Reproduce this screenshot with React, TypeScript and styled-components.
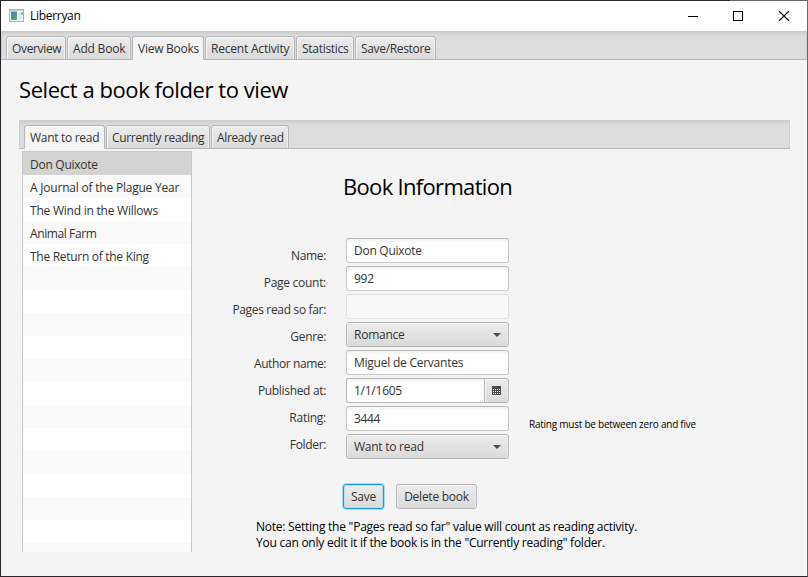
import React from "react";
import styled, { createGlobalStyle, css } from "styled-components";

const GlobalStyle = createGlobalStyle`
  *, *::before, *::after { box-sizing: border-box; }
  body { margin: 0; overflow: hidden; background: #f4f4f4; }
  button, input { font: inherit; letter-spacing: inherit; color: inherit; }
`;

const Window = styled.div`
  width: 808px;
  height: 577px;
  display: flex;
  flex-direction: column;
  background: #f4f4f4;
  border: 1px solid #28252c;
  border-right-color: #696969;
  font: 12px/16px "Open Sans", "Noto Sans", sans-serif;
  letter-spacing: -0.25px;
  color: #333;
  position: relative;

  &::before {
    content: "";
    position: absolute;
    top: -1px;
    right: -1px;
    width: 78px;
    height: 1px;
    background: #696969;
  }
`;

const TitleBar = styled.header`
  flex: none;
  height: 30px;
  display: flex;
  align-items: center;
  padding: 0 17px 0 8px;
  background: #fff;
  color: #000;
`;

const Title = styled.span`
  flex: 1;
  padding: 0 0 0 5px;
  letter-spacing: -0.3px;
`;

const WindowControls = styled.div`
  display: flex;
  gap: 35px;

  svg { display: block; }
`;

const TabHeader = styled.nav<{ $inner?: boolean }>`
  flex: none;
  height: 29px;
  display: flex;
  align-items: flex-end;
  gap: 1px;
  padding-left: 5px;
  background: linear-gradient(#cbcbcb, #d6d6d6 3px, #ddd 6px);
  box-shadow: inset 0 -1px #b5b5b5, inset 1px 0 #cecece, inset -1px 0 #cecece;
  ${(p) => p.$inner && css`margin: 0 17px 0 18px;`}
`;

const Tab = styled.button<{
  $width: number;
  $spacing: number;
  $selected?: boolean;
  $inner?: boolean;
}>`
  flex: none;
  width: ${(p) => p.$width}px;
  height: 24px;
  padding: ${(p) => (p.$inner ? 2 : 1)}px 0 0 5px;
  text-align: left;
  white-space: nowrap;
  line-height: ${(p) => (p.$inner ? 20 : 21)}px;
  letter-spacing: ${(p) => p.$spacing}px;
  border: 1px solid #b5b5b5;
  border-radius: 3px 3px 0 0;
  background: linear-gradient(#ececec, #dadada);
  box-shadow: inset 1px 1px #f8f8f8, inset -1px 0 #eee;
  ${(p) => p.$selected && css`
    background: #f4f4f4;
    border-bottom-color: #f4f4f4;
    box-shadow: inset 0 1px #fff;
  `}
`;

const Heading = styled.h1`
  margin: 14px 0 15px 18px;
  font-size: 22px;
  line-height: 31px;
  font-weight: 400;
  letter-spacing: -0.43px;
  color: #000;
`;

const Content = styled.main`
  display: flex;
  padding: 2px 0 0 21px;
`;

const BookList = styled.ul`
  flex: none;
  width: 170px;
  height: 401px;
  margin: 0;
  padding: 0;
  overflow: hidden;
  list-style: none;
  background: #fff;
  border: solid #c8c8c8;
  border-width: 1px 1px 0;
`;

const BookItem = styled.li<{ $spacing?: number; $selected?: boolean }>`
  height: 23px;
  padding-left: 7px;
  line-height: 25px;
  white-space: nowrap;
  letter-spacing: ${(p) => p.$spacing ?? -0.25}px;

  &:nth-child(even) { background: #f9f9f9; }
  ${(p) => p.$selected && css`background: #d3d3d3;`}
`;

const Details = styled.section`
  flex: 1;
  display: flex;
  flex-direction: column;
  align-items: flex-start;
`;

const Subheading = styled.h2`
  margin: 20px 0 0 151px;
  font-size: 22px;
  line-height: 31px;
  font-weight: 400;
  letter-spacing: -0.68px;
  color: #000;
`;

const Form = styled.form`
  display: flex;
  margin: 36px 0 0 34px;
`;

const Labels = styled.div`
  width: 100px;
  display: flex;
  flex-direction: column;
  align-items: flex-end;
  padding-top: 4px;
`;

const Label = styled.label<{ $spacing?: number }>`
  height: 27px;
  line-height: 27px;
  white-space: nowrap;
  letter-spacing: ${(p) => p.$spacing ?? -0.33}px;
`;

const Fields = styled.div`
  width: 163px;
  margin-left: 20px;
  display: flex;
  flex-direction: column;
  gap: 3px;
`;

const fieldBox = css`
  width: 100%;
  height: 25px;
  padding: 0 7px;
  border: 1px solid #bfbfbf;
  border-radius: 3px;
`;

const TextInput = styled.input<{ $spacing?: number }>`
  ${fieldBox}
  outline: none;
  border-color: #b9b9b9 #c4c4c4 #cbcbcb;
  background: linear-gradient(#f2f2f2, #fff 4px);
  letter-spacing: ${(p) => p.$spacing ?? -0.25}px;

  &:disabled {
    border-color: #dadada #dfdfdf #e2e2e2;
    background: #f8f8f8;
  }
`;

const Combo = styled.button`
  ${fieldBox}
  display: flex;
  align-items: center;
  justify-content: space-between;
  border-color: #b5b5b5;
  background: linear-gradient(#ececec, #dadada);
  box-shadow: inset 0 1px #f8f8f8, inset 1px 0 #eee, inset -1px 0 #eee;
`;

const DatePicker = styled.div`
  display: flex;
  height: 25px;
`;

const DateInput = styled(TextInput)`
  flex: 1;
  min-width: 0;
  border-color: #b5b5b5;
  border-right: 0;
  border-radius: 3px 0 0 3px;
`;

const DateButton = styled.button`
  width: 25px;
  padding: 0;
  display: grid;
  place-items: center;
  border: 1px solid #b5b5b5;
  border-radius: 0 3px 3px 0;
  background: linear-gradient(#ececec, #dadada);
  box-shadow: inset 1px 1px #f8f8f8, inset -1px 0 #eee;
`;

const Hint = styled.p`
  align-self: flex-start;
  margin: 178px 0 0 20px;
  font-size: 10px;
  line-height: 16px;
  letter-spacing: -0.24px;
  color: #000;
`;

const Actions = styled.div`
  display: flex;
  gap: 12px;
  margin: 25px 0 0 151px;
`;

const ActionButton = styled.button<{ $width: number; $focused?: boolean }>`
  width: ${(p) => p.$width}px;
  height: 25px;
  padding: 0;
  border: 1px solid #b5b5b5;
  border-radius: 3px;
  background: linear-gradient(#ececec, #dadada);
  box-shadow: inset 0 1px #f8f8f8, inset 1px 0 #eee, inset -1px 0 #eee;
  ${(p) => p.$focused && css`
    border-color: #0f9cd4;
    box-shadow: 0 0 0 1px #a9dcf0, inset 0 0 0 1px #b9e0ee;
  `}
`;

const Note = styled.p`
  margin: 10px 0 0 64px;
  line-height: 16px;
  white-space: nowrap;
  color: #000;
  letter-spacing: -0.24px;
`;

const AppIcon = () => (
  <svg width="16" height="14" viewBox="0 0 16 14">
    <defs>
      <linearGradient id="pane" x1="0" y1="0" x2="0.6" y2="1">
        <stop offset="0" stopColor="#4f7fae" />
        <stop offset="1" stopColor="#4fa77c" />
      </linearGradient>
    </defs>
    <rect x="0.5" y="0.5" width="14" height="12" fill="#f4f6f7" stroke="#a8adb0" />
    <path d="M1 1.5h13" stroke="#ccd1d3" />
    <path d="M2 2.5h6v8.5H2z" fill="url(#pane)" />
    <path d="M9 3h3v8H9z" fill="#e3e6e8" />
    <path d="M12 3h2v3h-2z" fill="#8fc5a8" />
    <path d="M12 6h2v5h-2z" fill="#eceff0" />
  </svg>
);

const Arrow = () => (
  <svg width="8" height="4" viewBox="0 0 8 4">
    <path d="M0 0h8L4 4z" fill="#4e4e4e" />
  </svg>
);

const Calendar = () => (
  <svg width="9" height="10" viewBox="0 0 9 10" shapeRendering="crispEdges">
    <path d="M0 0h9v9H0z" fill="#4e4e4e" />
    <path d="M0 9h9v1H0z" fill="#f4f4f4" />
    <path d="M1 3.5h7M1 5.5h7M1 7.5h7" stroke="#ededed" strokeDasharray="1 1" />
  </svg>
);

const mainTabs = [
  { label: "Overview", width: 60, spacing: -0.35 },
  { label: "Add Book", width: 64, spacing: -0.2 },
  { label: "View Books", width: 72, spacing: -0.25, selected: true },
  { label: "Recent Activity", width: 90, spacing: -0.2 },
  { label: "Statistics", width: 58, spacing: -0.28 },
  { label: "Save/Restore", width: 81, spacing: -0.33 },
];

const folderTabs = [
  { label: "Want to read", width: 81, spacing: -0.3, selected: true },
  { label: "Currently reading", width: 104, spacing: -0.33 },
  { label: "Already read", width: 78, spacing: -0.37 },
];

const books = [
  { title: "Don Quixote", spacing: -0.27, selected: true },
  { title: "A Journal of the Plague Year", spacing: -0.21 },
  { title: "The Wind in the Willows", spacing: -0.23 },
  { title: "Animal Farm", spacing: -0.4 },
  { title: "The Return of the King", spacing: -0.29 },
];

const emptyRows = Array.from({ length: 13 }, (_, i) => i);

type TabInfo = { label: string; width: number; spacing: number; selected?: boolean };

const Tabs = ({ items, inner }: { items: TabInfo[]; inner?: boolean }) => (
  <TabHeader $inner={inner}>
    {items.map((t) => (
      <Tab
        key={t.label}
        $width={t.width}
        $spacing={t.spacing}
        $selected={t.selected}
        $inner={inner}
      >
        {t.label}
      </Tab>
    ))}
  </TabHeader>
);

export default function App() {
  return (
    <>
      <GlobalStyle />
      <Window>
        <TitleBar>
          <AppIcon />
          <Title>Liberryan</Title>
          <WindowControls>
            <svg width="10" height="10" viewBox="0 0 10 10">
              <path d="M0 5.5h10" stroke="#000" />
            </svg>
            <svg width="10" height="10" viewBox="0 0 10 10">
              <rect x="0.5" y="0.5" width="9" height="9" fill="none" stroke="#000" />
            </svg>
            <svg width="12" height="10" viewBox="0 0 12 10">
              <path d="M1 0L11 10M11 0L1 10" stroke="#000" strokeWidth="1.1" />
            </svg>
          </WindowControls>
        </TitleBar>
        <Tabs items={mainTabs} />
        <Heading>Select a book folder to view</Heading>
        <Tabs items={folderTabs} inner />
        <Content>
          <BookList>
            {books.map((b) => (
              <BookItem key={b.title} $spacing={b.spacing} $selected={b.selected}>
                {b.title}
              </BookItem>
            ))}
            {emptyRows.map((i) => (
              <BookItem key={i} />
            ))}
          </BookList>
          <Details>
            <Subheading>Book Information</Subheading>
            <Form>
              <Labels>
                <Label>Name:</Label>
                <Label $spacing={-0.28}>Page count:</Label>
                <Label $spacing={-0.33}>Pages read so far:</Label>
                <Label>Genre:</Label>
                <Label $spacing={-0.4}>Author name:</Label>
                <Label>Published at:</Label>
                <Label $spacing={-0.25}>Rating:</Label>
                <Label $spacing={-0.35}>Folder:</Label>
              </Labels>
              <Fields>
                <TextInput defaultValue="Don Quixote" $spacing={-0.27} />
                <TextInput defaultValue="992" />
                <TextInput disabled />
                <Combo type="button">
                  Romance
                  <Arrow />
                </Combo>
                <TextInput defaultValue="Miguel de Cervantes" $spacing={-0.24} />
                <DatePicker>
                  <DateInput defaultValue="1/1/1605" />
                  <DateButton type="button">
                    <Calendar />
                  </DateButton>
                </DatePicker>
                <TextInput defaultValue="3444" $spacing={-0.35} />
                <Combo type="button">
                  Want to read
                  <Arrow />
                </Combo>
              </Fields>
              <Hint>Rating must be between zero and five</Hint>
            </Form>
            <Actions>
              <ActionButton $width={41} $focused>Save</ActionButton>
              <ActionButton $width={81}>Delete book</ActionButton>
            </Actions>
            <Note>
              Note: Setting the "Pages read so far" value will count as reading activity.
              <br />
              You can only edit it if the book is in the "Currently reading" folder.
            </Note>
          </Details>
        </Content>
      </Window>
    </>
  );
}
